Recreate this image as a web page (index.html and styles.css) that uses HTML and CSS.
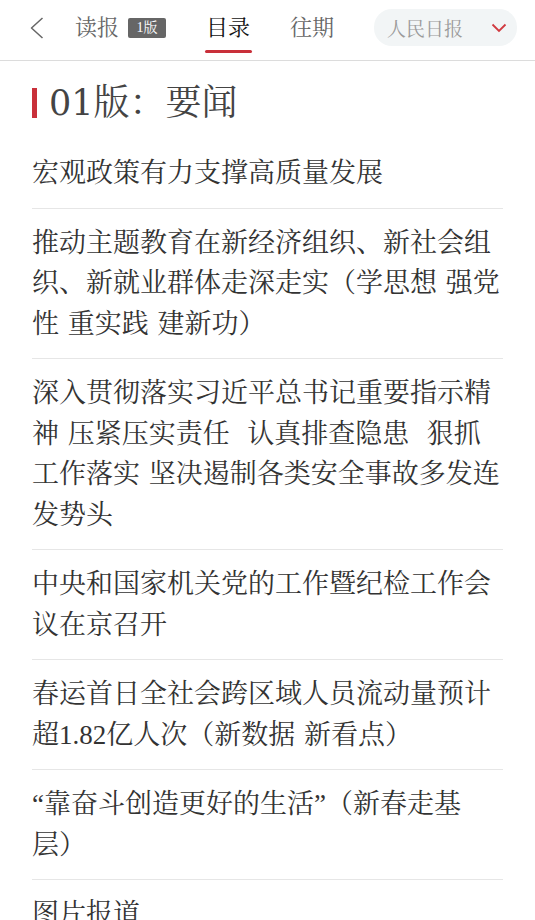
FILE: index.html
```html
<!DOCTYPE html>
<html lang="zh-CN">
<head>
<meta charset="utf-8">
<title>目录</title>
<link rel="stylesheet" href="styles.css">
</head>
<body>
<header class="topbar">
  <span class="back" aria-label="返回">
    <svg width="14" height="22" viewBox="0 0 14 22"><path d="M12.5 1 L1.5 11 L12.5 21" fill="none" stroke="#666" stroke-width="1.5" stroke-linejoin="round"/></svg>
  </span>
  <span class="tab tab-read">读报</span>
  <span class="badge">1版</span>
  <span class="tab tab-active">目录</span>
  <span class="tab tab-past">往期</span>
  <div class="paper-select">
    <span class="paper-name">人民日报</span>
    <svg class="paper-arrow" width="16" height="10" viewBox="0 0 16 10"><path d="M1.5 1.5 L8 8 L14.5 1.5" fill="none" stroke="#d13a40" stroke-width="1.8"/></svg>
  </div>
</header>

<main class="content">
  <h1 class="section-title"><span class="bar"></span><span class="title-text"><span class="num">01</span>版：要闻</span></h1>
  <ul class="articles">
    <li class="article">宏观政策有力支撑高质量发展</li>
    <li class="article">推动主题教育在新经济组织、新社会组织、新就业群体走深走实（学思想 强党性 重实践 建新功）</li>
    <li class="article">深入贯彻落实习近平总书记重要指示精神 压紧压实责任&nbsp; 认真排查隐患&nbsp; 狠抓工作落实 坚决遏制各类安全事故多发连发势头</li>
    <li class="article">中央和国家机关党的工作暨纪检工作会议在京召开</li>
    <li class="article">春运首日全社会跨区域人员流动量预计超1.82亿人次（新数据 新看点）</li>
    <li class="article">“靠奋斗创造更好的生活”（新春走基层）</li>
    <li class="article">图片报道</li>
  </ul>
</main>
</body>
</html>
```

FILE: styles.css
```css
* { box-sizing: border-box; }
html, body { margin: 0; padding: 0; background: #fff; }
body {
  width: 535px;
  height: 920px;
  overflow: hidden;
  font-family: "Liberation Serif", "Noto Serif CJK SC", "Noto Sans CJK SC", serif;
  color: #333;
  text-spacing-trim: space-all;
}

.topbar {
  height: 61px;
  padding-bottom: 5px;
  border-bottom: 1px solid #dcdcdc;
  display: flex;
  align-items: center;
}
.back {
  margin-left: 30px;
  display: flex;
  align-items: center;
}
.tab {
  font-size: 22px;
  line-height: 30px;
  color: #666;
}
.tab-read { margin-left: 31px; }
.badge {
  margin-left: 9px;
  width: 38px;
  height: 20px;
  background: #666;
  color: #fff;
  border-radius: 2px;
  font-size: 14px;
  line-height: 20px;
  text-align: center;
}
.tab-active {
  margin-left: 40px;
  color: #111;
  position: relative;
}
.tab-active::after {
  content: "";
  position: absolute;
  left: -1px;
  right: -2px;
  top: 37px;
  height: 3px;
  border-radius: 2px;
  background: #c9303a;
}
.tab-past { margin-left: 40px; }
.paper-select {
  margin-left: 40px;
  width: 143px;
  height: 37px;
  border-radius: 18px;
  background: #f2f5f6;
  display: flex;
  align-items: center;
  justify-content: space-between;
  padding: 0 10px 0 13px;
}
.paper-name {
  font-size: 19px;
  color: #9a9a9a;
}
.paper-arrow { display: block; }

.content {
  padding: 0 32px;
}
.section-title {
  margin: 0;
  padding: 22px 0 16px;
  display: flex;
  align-items: center;
  gap: 12px;
  font-size: 36px;
  line-height: 40px;
  font-weight: normal;
  color: #444;
}
.bar {
  width: 5px;
  height: 30px;
  background: #c9303a;
}
.num {
  font-family: "DejaVu Serif", serif;
  font-size: 35px;
}
.articles {
  list-style: none;
  margin: 0;
  padding: 0;
}
.article {
  padding: 14px 0;
  border-bottom: 1px solid #e6e6e6;
  font-size: 27px;
  line-height: 40.5px;
  color: #333;
  word-spacing: 2px;
}
```
